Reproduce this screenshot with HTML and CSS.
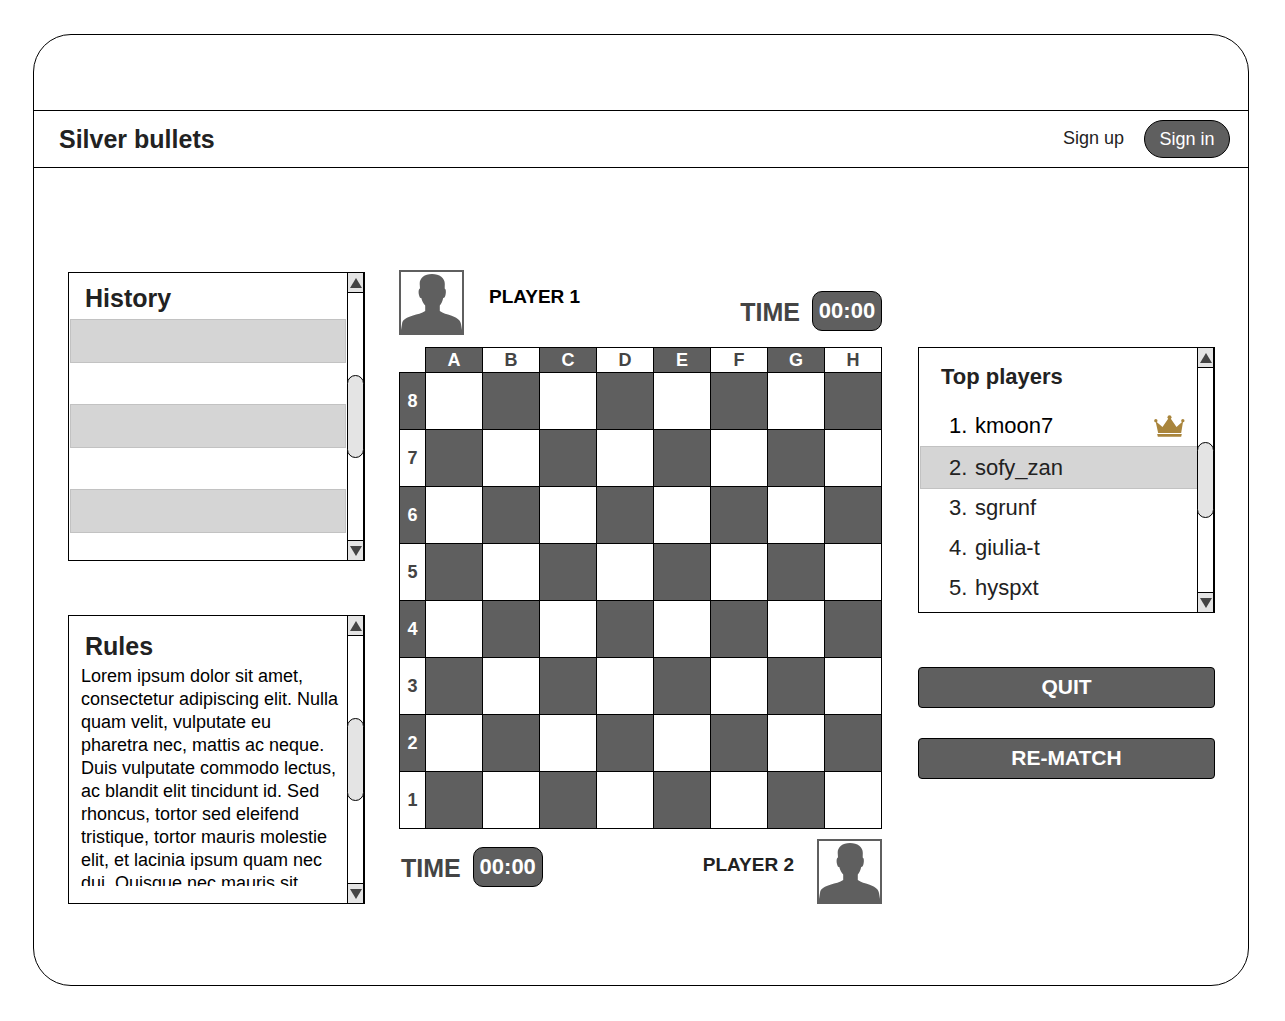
FILE: index.html
```html
<!DOCTYPE html>
<html lang="en">
<head>
<meta charset="utf-8">
<meta name="viewport" content="width=device-width, initial-scale=1">
<title>Silver bullets</title>
<link rel="stylesheet" href="styles.css">
</head>
<body>
<svg class="defs" aria-hidden="true">
  <symbol id="person" viewBox="2 2 61 61">
    <path d="M33 4C25.500 4 20.500 8 20.700 14L21 18.500C19.300 19 19.300 23 20.300 26C20.800 28 21.500 28 22.300 28C23 31 24.500 34 26.200 35.500L26.200 41C23 43.500 18 44 14 45.500C8 47.500 3.500 49 3 54L2 60V63H63V60L62 54C61 49 57 47.500 52 45.500C48 44 44 43.500 40.800 41L40.800 35.500C42.500 34 43.500 31 44.200 28C45.500 28 46 27 46.500 25C47.200 22 47 19 45.700 18.500L45.800 14C46 8 40.500 4 33 4Z"/>
  </symbol>
  <symbol id="up" viewBox="0 0 12 10"><path d="M6 0L12 10H0Z"/></symbol>
  <symbol id="down" viewBox="0 0 12 10"><path d="M0 0H12L6 10Z"/></symbol>
</svg>
<div class="window">
  <header class="topbar">
    <h1 class="brand">Silver bullets</h1>
    <nav class="account">
      <a class="sign-up" href="#">Sign up</a>
      <button class="sign-in" type="button">Sign in</button>
    </nav>
  </header>
  <main class="game">
    <div class="side">
      <section class="panel log">
        <div class="panel-body">
          <h2 class="panel-title">History</h2>
          <ul class="history"><li></li><li></li><li></li><li></li><li></li></ul>
        </div>
        <div class="scrollbar">
          <button class="arrow" type="button" aria-label="Scroll history up"><svg><use href="#up"/></svg></button>
          <div class="track"><div class="thumb"></div></div>
          <button class="arrow" type="button" aria-label="Scroll history down"><svg><use href="#down"/></svg></button>
        </div>
      </section>
      <section class="panel log">
        <div class="panel-body rules">
          <h2 class="panel-title">Rules</h2>
          <p class="rules-text">Lorem ipsum dolor sit amet, consectetur adipiscing elit. Nulla quam velit, vulputate eu pharetra nec, mattis ac neque. Duis vulputate commodo lectus, ac blandit elit tincidunt id. Sed rhoncus, tortor sed eleifend tristique, tortor mauris molestie elit, et lacinia ipsum quam nec dui. Quisque nec mauris sit</p>
        </div>
        <div class="scrollbar">
          <button class="arrow" type="button" aria-label="Scroll rules up"><svg><use href="#up"/></svg></button>
          <div class="track"><div class="thumb"></div></div>
          <button class="arrow" type="button" aria-label="Scroll rules down"><svg><use href="#down"/></svg></button>
        </div>
      </section>
    </div>

    <section class="match">
      <div class="player">
        <svg class="avatar" aria-hidden="true"><use href="#person"/></svg>
        <span class="name first">PLAYER 1</span>
        <div class="timer"><span class="time">TIME</span><span class="clock">00:00</span></div>
      </div>
      <table class="board">
        <thead>
          <tr><td class="corner"></td><th>A</th><th>B</th><th>C</th><th>D</th><th>E</th><th>F</th><th>G</th><th>H</th></tr>
        </thead>
        <tbody>
          <tr><th>8</th><td></td><td></td><td></td><td></td><td></td><td></td><td></td><td></td></tr>
          <tr><th>7</th><td></td><td></td><td></td><td></td><td></td><td></td><td></td><td></td></tr>
          <tr><th>6</th><td></td><td></td><td></td><td></td><td></td><td></td><td></td><td></td></tr>
          <tr><th>5</th><td></td><td></td><td></td><td></td><td></td><td></td><td></td><td></td></tr>
          <tr><th>4</th><td></td><td></td><td></td><td></td><td></td><td></td><td></td><td></td></tr>
          <tr><th>3</th><td></td><td></td><td></td><td></td><td></td><td></td><td></td><td></td></tr>
          <tr><th>2</th><td></td><td></td><td></td><td></td><td></td><td></td><td></td><td></td></tr>
          <tr><th>1</th><td></td><td></td><td></td><td></td><td></td><td></td><td></td><td></td></tr>
        </tbody>
      </table>
      <div class="player away">
        <div class="timer"><span class="time">TIME</span><span class="clock">00:00</span></div>
        <span class="name">PLAYER 2</span>
        <svg class="avatar" aria-hidden="true"><use href="#person"/></svg>
      </div>
    </section>

    <div class="side ranking">
      <section class="panel">
        <div class="panel-body">
          <h2 class="panel-title small">Top players</h2>
          <ol class="players">
            <li class="leader"><span class="rank">1.</span>kmoon7
              <svg class="crown" viewBox="41 44 92 66" aria-hidden="true"><circle cx="46" cy="61" r="5"/><circle cx="87" cy="51" r="6"/><circle cx="127" cy="61" r="5"/><path d="M45 62L66 80L84 54H90L108 80L128 62L122 98H53ZM50 101H124L122 109H52Z"/></svg>
            </li>
            <li class="current"><span class="rank">2.</span>sofy_zan</li>
            <li><span class="rank">3.</span>sgrunf</li>
            <li><span class="rank">4.</span>giulia-t</li>
            <li><span class="rank">5.</span>hyspxt</li>
          </ol>
        </div>
        <div class="scrollbar">
          <button class="arrow" type="button" aria-label="Scroll players up"><svg><use href="#up"/></svg></button>
          <div class="track"><div class="thumb"></div></div>
          <button class="arrow" type="button" aria-label="Scroll players down"><svg><use href="#down"/></svg></button>
        </div>
      </section>
      <div class="actions">
        <button class="action" type="button">QUIT</button>
        <button class="action" type="button">RE-MATCH</button>
      </div>
    </div>
  </main>
</div>
</body>
</html>
```

FILE: styles.css
```css
:root {
  --dark: #5f5f5f;
  --ink: #222;
  --line: #000;
}

* { box-sizing: border-box; }

body {
  margin: 34px 36px 34px 33px;
  background: #fff;
  color: #000;
  font-family: "Liberation Sans", Arial, sans-serif;
}

h1, h2, p, ul, ol { margin: 0; padding: 0; list-style: none; }

button {
  padding: 0;
  border: 1px solid var(--line);
  background: var(--dark);
  color: #fff;
  font-family: inherit;
}

.defs { display: none; }

.window {
  padding-top: 75px;
  border: 1px solid var(--line);
  border-radius: 38px;
}

.topbar {
  display: flex;
  align-items: center;
  justify-content: space-between;
  height: 58px;
  padding: 0 18px 0 25px;
  border-top: 1px solid var(--line);
  border-bottom: 1px solid var(--line);
}

.brand { color: var(--ink); font-size: 25px; line-height: 30px; }

.account { display: flex; align-items: center; gap: 20px; font-size: 18px; }

.sign-up { color: var(--ink); text-decoration: none; line-height: 22px; padding-bottom: 2px; }

.sign-in { width: 86px; height: 38px; border-radius: 19px; font-size: 18px; }

.game {
  display: grid;
  grid-template-columns: 297fr 483fr 299fr;
  gap: 34px;
  padding: 102px 33px 81px 34px;
}

.side { display: flex; flex-direction: column; gap: 54px; min-width: 0; padding-top: 2px; }

.panel { display: flex; border: 1px solid var(--line); }

.log { height: 289px; }

.panel-body { flex: 1; min-width: 0; overflow: hidden; }

.panel-title {
  padding: 10px 16px 6px;
  color: var(--ink);
  font-size: 25px;
  line-height: 30px;
}

.panel-title.small { padding: 14px 22px; font-size: 22px; }

.history { padding: 0 1px; }
.history li { height: 41px; }
.history li:nth-child(odd) {
  height: 44px;
  border: 1px solid #c2c2c2;
  background: #d5d5d5;
}

.rules { padding: 5px 8px 17px 12px; display: flex; flex-direction: column; }
.rules .panel-title { padding: 10px 4px 4px; }
.rules-text { flex: 1; min-height: 0; overflow: hidden; font-size: 18px; line-height: 23px; }

.scrollbar {
  display: flex;
  flex-direction: column;
  width: 17px;
  border: solid var(--line);
  border-width: 0 1px;
}

.arrow {
  display: flex;
  align-items: center;
  justify-content: center;
  height: 20px;
  border-width: 0 0 1px;
  background: #e4e4e4;
}
.arrow:last-child { border-width: 1px 0 0; }
.arrow svg { width: 12px; height: 10px; fill: #444; }

.track { flex: 1; display: flex; align-items: center; }

.thumb {
  flex: 1;
  height: 34%;
  margin: 0 -1px;
  border: 1px solid var(--line);
  border-radius: 9px;
  background: #e4e4e4;
}

.match { min-width: 0; }

.player { display: flex; align-items: center; height: 65px; margin-bottom: 12px; }

.avatar { width: 65px; height: 65px; border: 2px solid var(--dark); fill: var(--dark); }

.name { font-size: 19px; font-weight: bold; line-height: 22px; color: var(--ink); }
.name.first { padding: 0 0 12px 25px; color: #000; }

.timer { display: flex; align-items: center; gap: 12px; }
.player .timer { margin-left: auto; padding-top: 17px; }

.time { color: #444; font-size: 25px; font-weight: bold; line-height: 30px; padding-top: 2px; }

.clock {
  width: 70px;
  border: 1px solid var(--line);
  border-radius: 10px;
  background: var(--dark);
  color: #fff;
  font-size: 22px;
  font-weight: bold;
  line-height: 38px;
  text-align: center;
}

.away { margin: 10px 0 0; }
.away .timer { margin: 0 auto 0 2px; padding: 0 0 10px; }
.away .name { padding: 0 23px 13px 0; }

.board {
  width: 100%;
  border-collapse: collapse;
  table-layout: fixed;
  color: #444;
  font-size: 18px;
}
.board th, .board td { height: 57px; padding: 0; border: 1px solid var(--line); }
.board thead th { height: 25px; }
.board .corner { width: 26px; height: 25px; border-top: 0; border-left: 0; }
.board thead th:nth-child(even),
.board tbody tr:nth-child(odd) th,
.board tbody tr:nth-child(odd) td:nth-child(odd),
.board tbody tr:nth-child(even) td:nth-child(even) { background: var(--dark); color: #fff; }

.ranking { padding: 77px 0 0 2px; }
.ranking .panel { height: 266px; }

.players { color: var(--ink); font-size: 22px; line-height: 38px; }
.players li { display: flex; align-items: center; margin-bottom: 2px; padding-left: 30px; }
.players .leader { height: 40px; margin: 0; color: #000; }
.players .current {
  height: 43px;
  margin: 0 0 0 1px;
  padding-left: 28px;
  border: 1px solid #c2c2c2;
  border-right: 0;
  background: #d5d5d5;
}
.rank { width: 26px; }
.crown { width: 31px; height: 22px; margin: 0 12px 0 auto; fill: #a9853c; }

.actions { display: flex; flex-direction: column; gap: 30px; }
.action { height: 41px; padding-bottom: 2px; border-radius: 4px; font-size: 21px; font-weight: bold; }
```
